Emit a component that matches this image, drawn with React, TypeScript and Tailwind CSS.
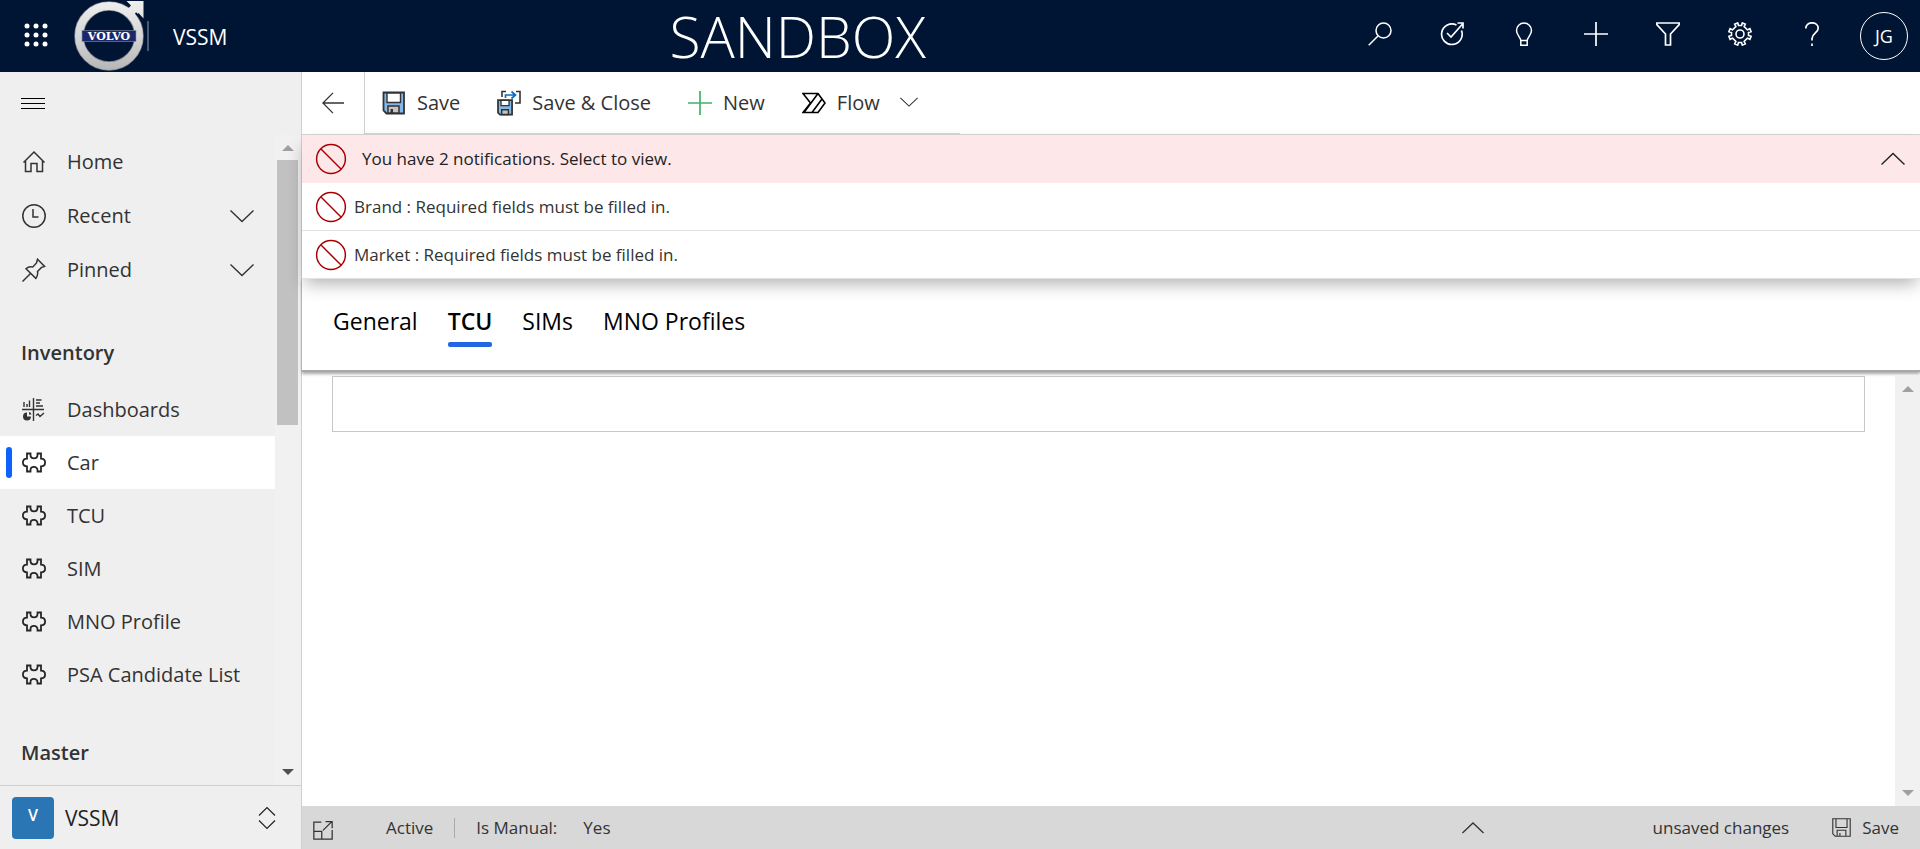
import type { ReactNode } from "react";

function Svg({ size = 24, stroke = 1.5, className = "", children }: { size?: number; stroke?: number; className?: string; children: ReactNode }) {
  return (
    <svg
      width={size}
      height={size}
      viewBox="0 0 24 24"
      fill="none"
      stroke="currentColor"
      strokeWidth={stroke}
      className={`shrink-0 ${className}`}
      aria-hidden="true"
    >
      {children}
    </svg>
  );
}

const Chevron = ({ up = false, size = 24 }: { up?: boolean; size?: number }) => (
  <Svg size={size} stroke={1.4}>
    <path d={up ? "M0.5 17.5 12 6.5l11.5 11" : "M0.5 6.5 12 17.5l11.5-11"} />
  </Svg>
);

const Puzzle = () => (
  <Svg stroke={1.8} className="text-[#262626]">
    <path d="M5 2.500h3.500v1.500c0 2 1.500 3.300 3.500 3.300s3.500-1.300 3.500-3.300V2.500H19v5.200c2.800 0 4.100 1.500 4.100 3.800s-1.300 3.800-4.100 3.800V20.500h-3.500v-1.300c0-2-1.500-3.300-3.500-3.300s-3.500 1.300-3.500 3.300v1.300H5v-5.200c-2.800 0-4.100-1.500-4.100-3.800S2.200 7.700 5 7.700z" />
  </Svg>
);

const Dashboard = () => (
  <Svg stroke={1.4}>
    <path d="M0 11.500h22M11.500 0v23M2 4v5M5 6v3M7.500 2.500V9M14 2h5.500M14 5h4M14 8h7M14 17.500l2-1.500 2 2.500L22 15" />
    <path d="M5 14.500v4h4a4 4 0 1 1-4-4zM7 14a3 3 0 0 1 2.500 2.500H7z" fill="currentColor" stroke="none" />
  </Svg>
);

const Prohibit = () => (
  <Svg size={32} stroke={1.1} className="text-[#a80000]">
    <circle cx="12" cy="12" r="10.800" />
    <path d="M4.500 4.500l15 15" />
  </Svg>
);

function VolvoLogo() {
  return (
    <svg width="72" height="72" viewBox="0 0 72 72" aria-label="Volvo" className="ml-px shrink-0">
      <defs>
        <linearGradient id="metal" x1="0" y1="0" x2="0" y2="72" gradientUnits="userSpaceOnUse">
          <stop offset="0" stopColor="#f0f0f0" />
          <stop offset="0.5" stopColor="#d6d6d6" />
          <stop offset="1" stopColor="#b4b4b4" />
        </linearGradient>
      </defs>
      <circle cx="37" cy="36" r="30" fill="none" stroke="#7d828c" strokeWidth="9.500" />
      <circle cx="37" cy="36" r="30" fill="none" stroke="url(#metal)" strokeWidth="8" />
      <path d="M54.500 1H71.500V18.500L66.500 13 60 20.500 52 13 59 5.500z" fill="url(#metal)" />
      <path d="M63.500 13 70.500 20" stroke="#001433" strokeWidth="1.800" />
      <rect x="10" y="30.500" width="54" height="11" fill="#1b2768" stroke="#8d93ad" strokeWidth="0.600" />
      <text x="37" y="39.800" textAnchor="middle" fontFamily="DejaVu Serif, serif" fontWeight="700" fontSize="11" fill="#fff">
        VOLVO
      </text>
    </svg>
  );
}

const Floppy = () => (
  <svg width="24" height="24" viewBox="0 0 24 24" className="shrink-0" aria-hidden="true">
    <path d="M1.500 1.500h20.500v21h-17.500l-3-3z" fill="#83b9e8" stroke="#333" strokeWidth="1.800" />
    <path d="M5 2h13.500v9.500H5z" fill="#fff" stroke="#333" strokeWidth="1.400" />
    <path d="M6 22v-7h11V22z" fill="#c8c4c3" stroke="#333" strokeWidth="1.500" />
    <path d="M8.500 18H11v4H8.500z" fill="#333" />
  </svg>
);

const SaveClose = () => (
  <svg width="24" height="26" viewBox="0 0 24 26" className="shrink-0" aria-hidden="true">
    <g transform="translate(0 9) scale(0.67)">
      <path d="M1.500 1.500h21v22h-18l-3-3z" fill="#83b9e8" stroke="#333" strokeWidth="2.600" />
      <path d="M6 2h12v8H6z" fill="#fff" stroke="#333" strokeWidth="2" />
      <path d="M7 23v-7h10v7z" fill="#c8c4c3" stroke="#333" strokeWidth="2.200" />
    </g>
    <path d="M5 7V1.500h4M19 1.500h4v11.500h-5" fill="none" stroke="#333" strokeWidth="1.600" />
    <path d="M8.500 8V5h10M14.500 1.500 18.500 5l-4 3.500" fill="none" stroke="#0f6cbd" strokeWidth="1.700" />
  </svg>
);

const topIcons: { label: string; icon: ReactNode }[] = [
  { label: "Search", icon: <Svg><circle cx="15.500" cy="8.500" r="7.500" /><path d="M10 14 .7 23.300" /></Svg> },
  { label: "Assistant", icon: <Svg stroke={1.700}><path d="M16.500 3A10.300 10.300 0 1 0 21.500 8.500M7 11l4 4L23 1.500M17.500 1H23v5.500" /></Svg> },
  { label: "Tips", icon: <Svg><path d="M8.800 23.200v-4.400c0-3.600-4.300-5.600-4.300-10.200a7.500 7.500 0 0 1 15 0c0 4.600-4.300 6.600-4.300 10.200v4.400zM8.800 18.500h6.400" /></Svg> },
  { label: "New record", icon: <Svg stroke={1.700}><path d="M12 0v24M0 12h24" /></Svg> },
  { label: "Filter", icon: <Svg stroke={1.700}><path d="M.8 1h22.400v1.500l-8.700 9.500v11h-5V12L.8 2.500z" /></Svg> },
  { label: "Settings", icon: (
    <Svg stroke={1.600}>
      <circle cx="12" cy="12" r="4" />
      <path d="M10.500 3.500 9.700.9l-3 1.200 1.200 2.500-3.300 3.300-2.500-1.200-1.200 3 2.600.8v3l-2.600.8 1.200 3 2.500-1.200 3.300 3.300-1.200 2.500 3 1.200.8-2.600h3l.8 2.600 3-1.200-1.200-2.500 3.300-3.300 2.500 1.200 1.200-3-2.600-.8v-3l2.600-.8-1.200-3-2.500 1.200-3.300-3.300 1.200-2.500-3-1.200-.8 2.600z" />
    </Svg>
  ) },
  { label: "Help", icon: <Svg stroke={1.700}><path d="M5.800 6.500C5.800 3 8.500.8 12 .8s6.200 2.200 6.200 5.400c0 4.800-6.200 5.300-6.200 10.300v2M12 21.500V24" /></Svg> },
];

const NavItem = ({ icon, label, chevron = false, active = false, tall = false }: { icon: ReactNode; label: string; chevron?: boolean; active?: boolean; tall?: boolean }) => (
  <a
    href="#"
    className={`relative flex items-center gap-[21px] pr-[21px] pl-[22px] text-[20px] leading-6 text-[#333] ${tall ? "h-[54px]" : "h-[53px]"} ${active ? "bg-white" : ""}`}
  >
    {active && <span className="absolute top-[11px] left-[6px] h-[31px] w-[6px] rounded-[3px] bg-[#0b62ff]" />}
    {icon}
    <span className="grow">{label}</span>
    {chevron && <Chevron />}
  </a>
);

const Heading = ({ children }: { children: ReactNode }) => (
  <h2 className="mt-7 mb-[6px] flex h-12 items-center pl-[21px] text-[20px] leading-6 font-semibold text-[#333]">{children}</h2>
);

const Tri = ({ down = false, dark = false }: { down?: boolean; dark?: boolean }) => (
  <svg width="12" height="6" viewBox="0 0 12 6" className={dark ? "text-[#505050]" : "text-[#a0a0a0]"} aria-hidden="true">
    <path d={down ? "M0 0h12L6 6z" : "M0 6h12L6 0z"} fill="currentColor" />
  </svg>
);

function Sidebar() {
  return (
    <aside className="flex w-[302px] shrink-0 flex-col border-r border-[#d0d0d0] bg-[#efefef]">
      <button className="flex h-[63px] shrink-0 items-center pl-[21px]" aria-label="Collapse menu">
        <span className="flex flex-col gap-1">
          <span className="h-px w-6 bg-black" />
          <span className="h-px w-6 bg-black" />
          <span className="h-px w-6 bg-black" />
        </span>
      </button>
      <div className="flex min-h-0 flex-1">
        <nav className="min-w-0 flex-1 overflow-hidden">
          <div className="pb-1">
            <NavItem tall label="Home" icon={<Svg stroke={1.500}><path d="M1.500 12.500 12 2l10.500 10.500M3.500 10.500V21.500h5.500v-8h6v8h5.500V10.500" /></Svg>} />
            <NavItem tall chevron label="Recent" icon={<Svg><circle cx="12" cy="12" r="11.200" /><path d="M11 5v8h5.500" /></Svg>} />
            <NavItem tall chevron label="Pinned" icon={<Svg><path d="M.5 23.500 9 15M15.500 1.200l7.200 7.200-3.200 1-4 4c.5 2.700.2 4.800-1.700 7L4 10.700c2-2 4.300-2.400 6.800-1.800l3.700-4z" /></Svg>} />
          </div>
          <Heading>Inventory</Heading>
          <NavItem label="Dashboards" icon={<Dashboard />} />
          <NavItem label="Car" icon={<Puzzle />} active />
          <NavItem label="TCU" icon={<Puzzle />} />
          <NavItem label="SIM" icon={<Puzzle />} />
          <NavItem label="MNO Profile" icon={<Puzzle />} />
          <NavItem label="PSA Candidate List" icon={<Puzzle />} />
          <Heading>Master</Heading>
        </nav>
        <div className="flex w-[26px] flex-col items-center bg-[#f1f1f1] pr-px">
          <div className="flex h-[25px] items-center"><Tri /></div>
          <div className="h-[265px] w-[21px] bg-[#c1c1c1]" />
          <div className="mt-auto flex h-[27px] items-center"><Tri down dark /></div>
        </div>
      </div>
      <button className="flex h-[64px] shrink-0 items-center gap-[11px] border-t border-[#d0d0d0] pr-[22px] pl-3 text-left">
        <span className="flex size-[42px] items-center justify-center rounded-[4px] bg-[#2a76b4] pb-[5px] text-[16px] leading-5 font-semibold text-white">V</span>
        <span className="grow text-[21px] leading-6 text-[#222]">VSSM</span>
        <Svg size={24} stroke={1.200} className="text-[#222]"><path d="M4 9.500 12 1.500l8 8M4 14.500l8 8 8-8" /></Svg>
      </button>
    </aside>
  );
}

const Command = ({ icon, label }: { icon: ReactNode; label: string }) => (
  <button className="flex items-center gap-[11px]">
    {icon}
    <span>{label}</span>
  </button>
);

const Tab = ({ label, active = false }: { label: string; active?: boolean }) => (
  <button role="tab" aria-selected={active} className="flex flex-col gap-[5px] text-[23px] leading-8">
    <span className={active ? "font-semibold" : ""}>{label}</span>
    {active && <span className="h-[5px] w-full rounded-[2px] bg-[#2266e3]" />}
  </button>
);

export default function App() {
  return (
    <div className="flex h-screen min-h-[600px] flex-col bg-white font-['Open_Sans','Noto_Sans',sans-serif] text-[#222]">
      <header className="flex h-[72px] shrink-0 items-center bg-[#001433] text-white">
        <button className="flex w-[71px] justify-center pb-[2px]" aria-label="App launcher">
          <Svg>
            <g fill="currentColor" stroke="none">
              {[3, 12, 21].map((y) => [3, 12, 21].map((x) => <circle key={`${x}-${y}`} cx={x} cy={y} r="2.500" />))}
            </g>
          </Svg>
        </button>
        <VolvoLogo />
        <span className="mr-6 ml-[3px] h-[30px] w-[2px] bg-[#4b5a73]" />
        <span className="pt-[2px] pr-6 text-[21px] leading-7">VSSM</span>
        <div className="flex-1 text-center text-[57px] leading-[72px] font-light">SANDBOX</div>
        {topIcons.map((t) => (
          <button key={t.label} aria-label={t.label} className="flex w-[72px] justify-center pb-[4px]">{t.icon}</button>
        ))}
        <button className="flex w-[72px] justify-center">
          <span className="flex size-12 items-center justify-center rounded-full border border-white text-[18px] leading-6">JG</span>
        </button>
      </header>
      <div className="flex min-h-0 flex-1">
        <Sidebar />
        <main className="flex min-w-0 flex-1 flex-col">
          <div className="flex h-[63px] shrink-0 border-b border-[#d6d6d6] text-[20px] leading-6 text-[#333]">
            <button className="flex w-[63px] items-center justify-center border-r border-[#d0d0d0]" aria-label="Back">
              <Svg size={22} stroke={1.400}><path d="M24 12H1M12 1 1 12l11 11" /></Svg>
            </button>
            <div className="flex items-center gap-[37px] border-b border-[#d6d6d6] pr-[42px] pl-[17px]">
              <Command icon={<Floppy />} label="Save" />
              <Command icon={<SaveClose />} label="Save & Close" />
              <Command icon={<Svg stroke={1.700} className="text-[#3fb36b]"><path d="M12 0v24M0 12h24" /></Svg>} label="New" />
              <button className="flex items-center gap-[11px]">
                <Svg stroke={1.600} className="text-black"><path d="M1 2.500h15L23 12l-7 9.500H1L8.500 12zM16 2.500 2 21.500M20 8 10 21.500" /></Svg>
                <span>Flow</span>
                <span className="ml-[9px] pb-[2px]"><Chevron size={18} /></span>
              </button>
            </div>
          </div>
          <section className="relative z-10 shrink-0 text-[17px] leading-6 shadow-[0_8px_16px_-3px_rgba(0,0,0,0.3)]">
            <button className="flex h-12 w-full items-center gap-[15px] bg-[#fde7e9] pr-[15px] pl-[13px] text-left">
              <Prohibit />
              <span className="grow">You have 2 notifications. Select to view.</span>
              <Chevron up />
            </button>
            <div className="flex h-12 items-center gap-[7px] border-b border-[#e3e3e3] bg-white pl-[13px] text-[#333]">
              <Prohibit />
              <span>Brand : Required fields must be filled in.</span>
            </div>
            <div className="flex h-12 items-center gap-[7px] border-b border-[#e3e3e3] bg-white pl-[13px] text-[#333]">
              <Prohibit />
              <span>Market : Required fields must be filled in.</span>
            </div>
          </section>
          <div role="tablist" className="flex h-[93px] shrink-0 gap-[30px] border-b-2 border-[#a8a8a8] pt-[26px] pl-[31px] text-black shadow-[0_2px_3px_rgba(0,0,0,0.35)]">
            <Tab label="General" />
            <Tab label="TCU" active />
            <Tab label="SIMs" />
            <Tab label="MNO Profiles" />
          </div>
          <div className="mt-1 flex min-h-0 flex-1">
            <div className="min-w-0 flex-1 pr-[30px] pl-[30px]">
              <div className="h-[56px] border border-[#c8c8c8]" />
            </div>
            <div className="flex w-[25px] flex-col items-center justify-between bg-[#f1f1f1] pt-[10px] pb-[10px]">
              <Tri />
              <Tri down />
            </div>
          </div>
          <footer className="flex h-[43px] shrink-0 items-center bg-[#d8d8d8] pr-[21px] pl-[11px] text-[17px] leading-6 text-[#333]">
            <button aria-label="Open in new window" className="pt-1">
              <Svg size={20} stroke={1.500}><path d="M10 2.500H1v20.500h22V12M1 13.500h9.500V23M12 12.500 22.500 2M15 2h8v8" /></Svg>
            </button>
            <span className="ml-[53px]">Active</span>
            <span className="mx-[21px] h-5 w-px bg-[#aaa]" />
            <span>Is Manual:</span>
            <span className="ml-[26px]">Yes</span>
            <div className="ml-auto flex items-center">
              <button className="mr-[169px]" aria-label="Expand"><Chevron up size={22} /></button>
              <span>unsaved changes</span>
              <button className="ml-[43px] flex items-center gap-[11px]">
                <Svg size={19} stroke={1.400}><path d="M1 1h22v22H4l-3-3zM5 1v11h14V1M6.500 23v-7.500h11V23M10 19v4" /></Svg>
                <span>Save</span>
              </button>
            </div>
          </footer>
        </main>
      </div>
    </div>
  );
}
